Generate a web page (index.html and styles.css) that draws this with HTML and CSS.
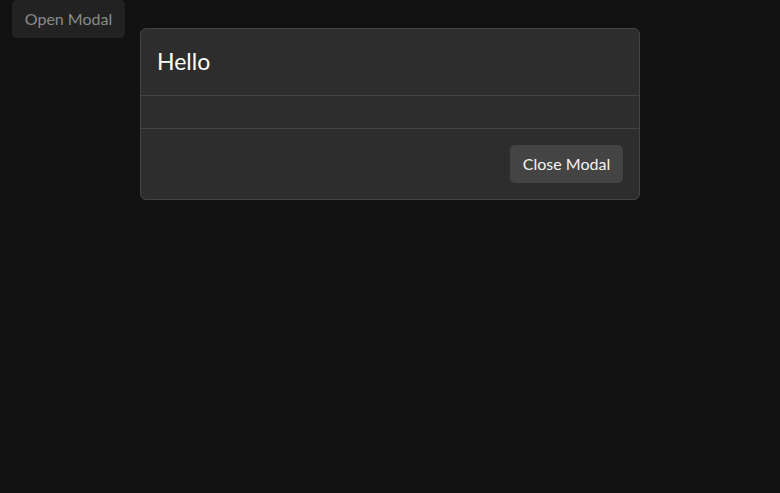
FILE: index.html
```html
<!DOCTYPE html>
<html>
<head>
<meta charset="utf-8">
<link rel="stylesheet" href="styles.css">
</head>
<body>
<button class="open-btn">Open Modal</button>
<div class="modal">
  <div class="modal-header">Hello</div>
  <div class="modal-body"></div>
  <div class="modal-footer"><button class="close-btn">Close Modal</button></div>
</div>
</body>
</html>
```
FILE: styles.css
```css
html, body {
  margin: 0;
  padding: 0;
  height: 100%;
  background: #111111;
  font-family: Lato, "Open Sans", sans-serif;
}
.open-btn {
  margin-left: 12px;
  height: 38px;
  width: 113px;
  padding: 0 0 2px;
  border: none;
  border-radius: 5px;
  background: #222222;
  color: #8a8a8a;
  font-family: inherit;
  font-size: 16px;
}
.modal {
  position: absolute;
  top: 28px;
  left: 140px;
  width: 498px;
  background: #2d2d2d;
  border: 1px solid #434343;
  border-radius: 6px;
  color: #fff;
}
.modal-header {
  padding: 15px 16px 17px;
  font-size: 23px;
  line-height: 34px;
  border-bottom: 1px solid #434343;
}
.modal-body {
  height: 32px;
  border-bottom: 1px solid #434343;
}
.modal-footer {
  display: flex;
  justify-content: flex-end;
  padding: 16px 16px 16px 15px;
}
.close-btn {
  height: 38px;
  width: 113px;
  padding: 0 0 2px;
  border: none;
  border-radius: 5px;
  background: #444444;
  color: #f2f2f2;
  font-family: inherit;
  font-size: 16px;
}
```
